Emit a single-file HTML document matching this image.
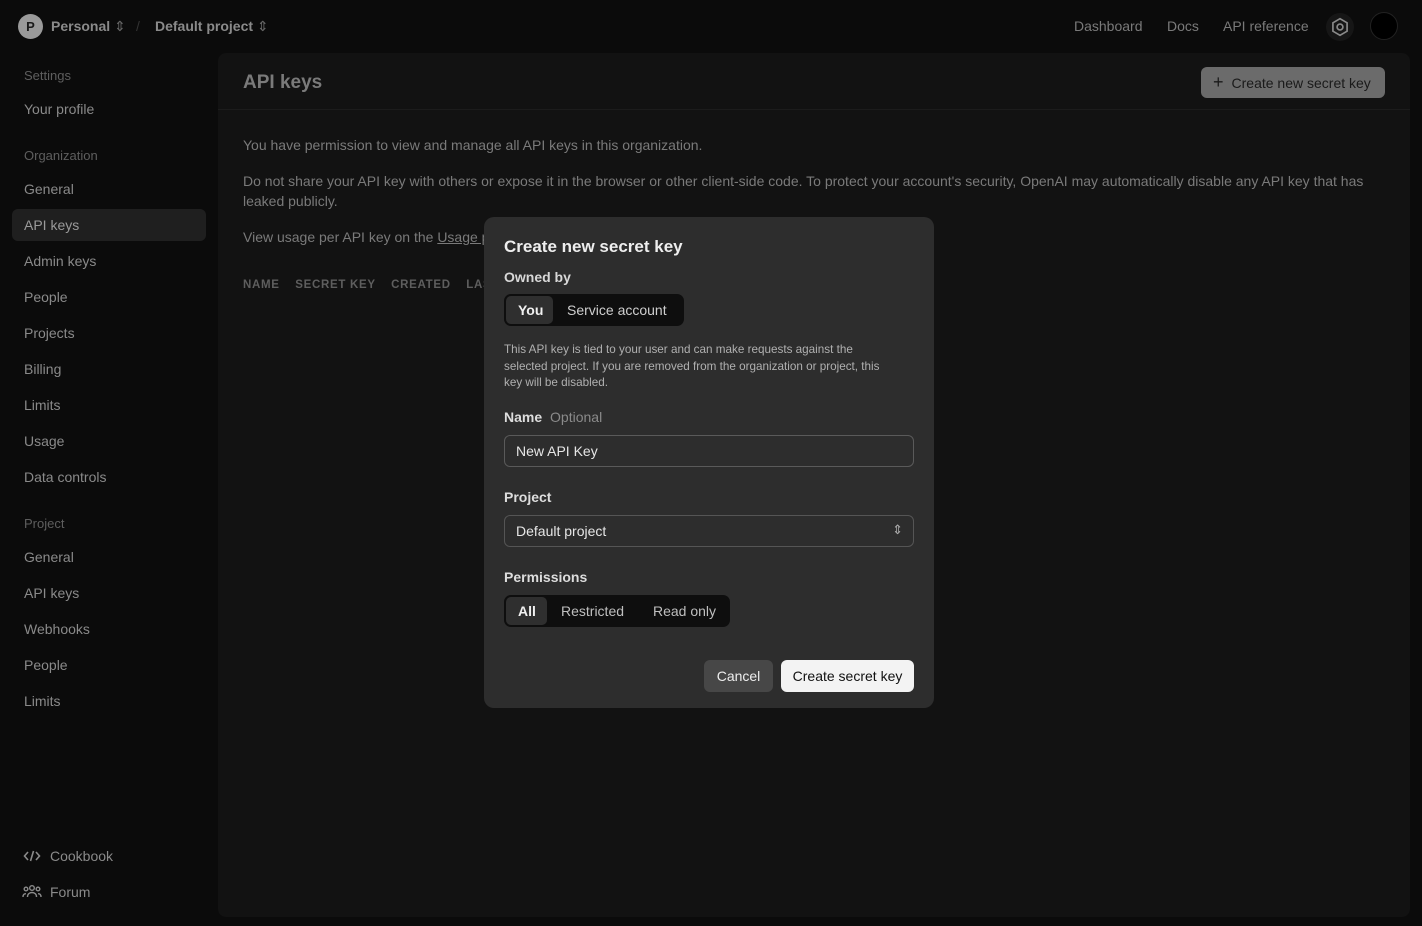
<!DOCTYPE html>
<html><head><meta charset="utf-8"><style>
*{box-sizing:border-box;margin:0;padding:0}
body{width:1422px;height:926px;background:#0b0b0b;font-family:"Liberation Sans",sans-serif;color:#8a8a8a;position:relative;overflow:hidden;font-size:14px}
.abs{position:absolute}
.nav a{position:absolute;color:#7a7a7a;font-size:14px}
.side div{position:absolute;left:24px;font-size:14px;color:#8a8a8a}
.side .h{color:#5e5e5e;font-size:13px}
.main{left:218px;top:53px;width:1192px;height:864px;background:#121212;border-radius:8px}
.modal{left:484px;top:217px;width:450px;height:491px;background:#2d2d2d;border-radius:10px;color:#e6e6e6}
.seg{background:#0e0e0e;border-radius:7px;height:32px}
.seg .on{background:#2f2f2f;border-radius:5px}
</style></head><body>
<div class="abs" style="left:18px;top:14px;width:25px;height:25px;border-radius:50%;background:#9a9a9a;color:#1a1a1a;font-size:13px;font-weight:bold;text-align:center;line-height:25px">P</div>
<div class="abs" style="left:51px;top:18px;color:#8a8a8a;font-weight:bold;font-size:14px">Personal <span style="color:#666;font-weight:normal">⇕</span></div>
<div class="abs" style="left:136px;top:18px;color:#333">/</div>
<div class="abs" style="left:155px;top:18px;color:#8a8a8a;font-weight:bold;font-size:14px">Default project <span style="color:#666;font-weight:normal">⇕</span></div>
<div class="nav">
<a style="left:1074px;top:18px">Dashboard</a>
<a style="left:1167px;top:18px">Docs</a>
<a style="left:1223px;top:18px">API reference</a>
</div>
<div class="abs" style="left:1326px;top:13px;width:28px;height:28px;border-radius:50%;background:#161616"></div>
<svg class="abs" style="left:1330px;top:17px" width="20" height="20" viewBox="0 0 24 24" fill="none" stroke="#8a8a8a" stroke-width="2"><path d="M12 2l8.5 5v10L12 22l-8.5-5V7z"/><circle cx="12" cy="12" r="3.5"/></svg>
<div class="abs" style="left:1370px;top:12px;width:28px;height:28px;border-radius:50%;background:#000;border:1px solid #222"></div>
<div class="side">
<div class="h" style="top:68px">Settings</div>
<div style="top:101px">Your profile</div>
<div class="h" style="top:148px">Organization</div>
<div style="top:181px">General</div>
<div class="abs" style="left:12px;top:209px;width:194px;height:32px;background:#1f1f1f;border-radius:6px"></div>
<div style="top:217px;color:#9a9a9a">API keys</div>
<div style="top:253px">Admin keys</div>
<div style="top:289px">People</div>
<div style="top:325px">Projects</div>
<div style="top:361px">Billing</div>
<div style="top:397px">Limits</div>
<div style="top:433px">Usage</div>
<div style="top:469px">Data controls</div>
<div class="h" style="top:516px">Project</div>
<div style="top:549px">General</div>
<div style="top:585px">API keys</div>
<div style="top:621px">Webhooks</div>
<div style="top:657px">People</div>
<div style="top:693px">Limits</div>
<div style="top:848px;left:50px">Cookbook</div>
<div style="top:884px;left:50px">Forum</div>
</div>
<svg class="abs" style="left:23px;top:849px" width="18" height="14" viewBox="0 0 18 14" fill="none" stroke="#8a8a8a" stroke-width="1.6"><path d="M5 3L1.5 7 5 11M13 3l3.5 4L13 11M10.5 2L7.5 12"/></svg>
<svg class="abs" style="left:22px;top:884px" width="20" height="15" viewBox="0 0 20 15" fill="none" stroke="#8a8a8a" stroke-width="1.4"><circle cx="10" cy="4" r="2.3"/><circle cx="4" cy="5" r="1.8"/><circle cx="16" cy="5" r="1.8"/><path d="M5.5 13c0-3 2-4.5 4.5-4.5s4.5 1.5 4.5 4.5M1 13c0-2 1-3.3 3-3.3M19 13c0-2-1-3.3-3-3.3"/></svg>
<div class="abs main">
<div class="abs" style="left:25px;top:19px;font-size:19px;font-weight:bold;color:#7a7a7a">API keys</div>
<div class="abs" style="left:0;top:56px;width:1192px;height:1px;background:#1c1c1c"></div>
<div class="abs" style="left:983px;top:14px;width:184px;height:31px;background:#6b6b6b;border-radius:6px;color:#1a1a1a;font-size:14px;line-height:31px;padding-left:12px"><span style="font-size:18px;margin-right:8px">+</span>Create new secret key</div>
<div class="abs" style="left:25px;top:84px;color:#7a7a7a">You have permission to view and manage all API keys in this organization.</div>
<div class="abs" style="left:25px;top:118px;width:1140px;line-height:20px;color:#7a7a7a">Do not share your API key with others or expose it in the browser or other client-side code. To protect your account's security, OpenAI may automatically disable any API key that has leaked publicly.</div>
<div class="abs" style="left:25px;top:176px;color:#7a7a7a">View usage per API key on the <u>Usage page</u>.</div>
<div class="abs" style="left:25px;top:226px;font-size:11.5px;font-weight:bold;letter-spacing:.7px;color:#5e5e5e">NAME &nbsp;&nbsp;&nbsp;SECRET KEY &nbsp;&nbsp;&nbsp;CREATED &nbsp;&nbsp;&nbsp;LAST USED</div>
</div>
<div class="abs modal">
<div class="abs" style="left:20px;top:20px;font-size:17px;font-weight:bold;color:#eee">Create new secret key</div>
<div class="abs" style="left:20px;top:52px;font-size:14px;font-weight:bold;color:#d8d8d8">Owned by</div>
<div class="abs seg" style="left:20px;top:77px;width:180px">
<div class="abs on" style="left:2px;top:2px;width:47px;height:28px"></div>
<div class="abs" style="left:14px;top:8px;font-weight:bold;color:#f0f0f0">You</div>
<div class="abs" style="left:63px;top:8px;color:#cfcfcf;font-size:14px">Service account</div>
</div>
<div class="abs" style="left:20px;top:125px;width:420px;white-space:nowrap;font-size:11.7px;line-height:16.5px;color:#b0b0b0">This API key is tied to your user and can make requests against the<br>selected project. If you are removed from the organization or project, this<br>key will be disabled.</div>
<div class="abs" style="left:20px;top:192px;font-weight:bold;color:#ddd">Name <span style="font-weight:normal;color:#8a8a8a;margin-left:4px">Optional</span></div>
<div class="abs" style="left:20px;top:218px;width:410px;height:32px;border:1px solid #5a5a5a;border-radius:6px;padding:7px 11px;color:#e6e6e6">New API Key</div>
<div class="abs" style="left:20px;top:272px;font-weight:bold;color:#ddd">Project</div>
<div class="abs" style="left:20px;top:298px;width:410px;height:32px;border:1px solid #555;border-radius:6px;padding:7px 11px;color:#e6e6e6">Default project<span style="position:absolute;right:10px;top:6px;color:#aaa;font-size:13px">⇕</span></div>
<div class="abs" style="left:20px;top:352px;font-weight:bold;color:#ddd">Permissions</div>
<div class="abs seg" style="left:20px;top:378px;width:226px">
<div class="abs on" style="left:2px;top:2px;width:41px;height:28px"></div>
<div class="abs" style="left:14px;top:8px;font-weight:bold;color:#f0f0f0">All</div>
<div class="abs" style="left:57px;top:8px;color:#bfbfbf">Restricted</div>
<div class="abs" style="left:149px;top:8px;color:#bfbfbf">Read only</div>
</div>
<div class="abs" style="left:220px;top:443px;width:69px;height:32px;background:#474747;border-radius:6px;text-align:center;line-height:32px;color:#eee">Cancel</div>
<div class="abs" style="left:297px;top:443px;width:133px;height:32px;background:#f3f3f3;border-radius:6px;text-align:center;line-height:32px;color:#111">Create secret key</div>
</div>
</body></html>
